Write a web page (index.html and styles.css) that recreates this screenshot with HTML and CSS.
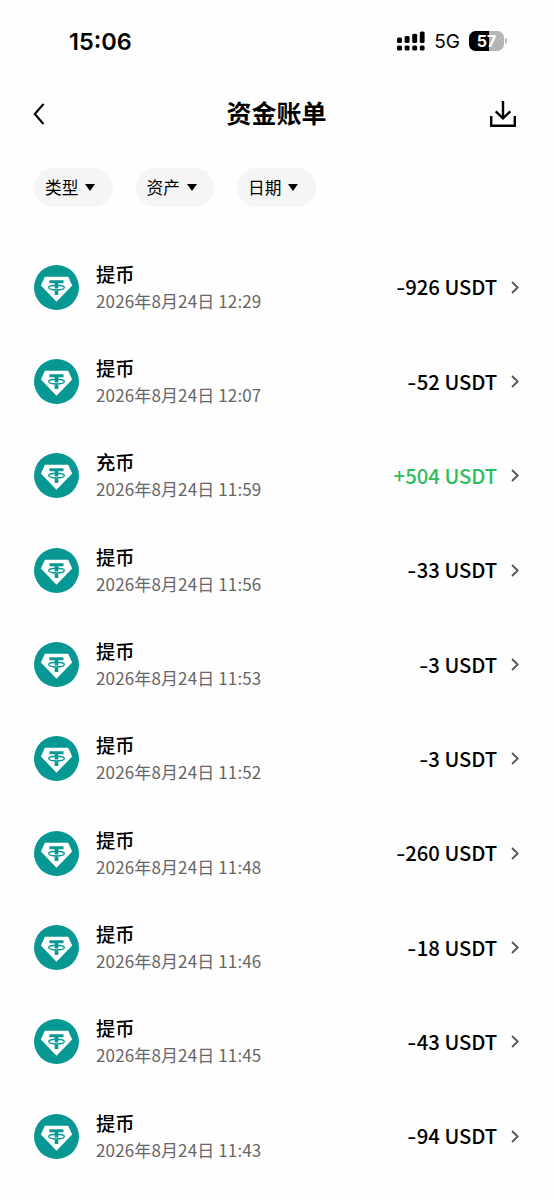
FILE: index.html
```
<!DOCTYPE html>
<html lang="zh-CN">
<head>
<meta charset="utf-8">
<title>资金账单</title>
<link rel="stylesheet" href="styles.css">
</head>
<body>
<svg class="defs" aria-hidden="true">
  <symbol id="coin" viewBox="0 0 45 45">
    <circle cx="22.5" cy="22.5" r="22.5" fill="#079893"/>
    <path d="M10.9 11.7H34.2L38.2 20.4L22.5 36.8L6.9 20.4Z" fill="#fff"/>
    <path d="M15.5 15.2H29.5V18.3H24.3V23.6H20.7V18.3H15.5ZM20.7 25.4H24.3V30H20.7Z" fill="#079893"/>
    <ellipse cx="22.5" cy="22.6" rx="7.8" ry="2.4" fill="none" stroke="#079893" stroke-width="1.4"/>
  </symbol>
  <symbol id="chevron" viewBox="0 0 8 13">
    <path d="M1 1L6.7 6.5L1 12" fill="none" stroke="#555" stroke-width="1.8"/>
  </symbol>
</svg>
<div class="status">
  <span class="time">15:06</span>
  <svg class="signal" width="28" height="20" viewBox="0 0 28 20">
    <rect x="0" y="6.5" width="5" height="5.5" rx="1.5"/><rect x="7.6" y="5" width="5" height="7" rx="1.5"/><rect x="15.2" y="2.8" width="5" height="9.2" rx="1.5"/><rect x="22.8" y="0.5" width="4.8" height="11.5" rx="1.5"/>
    <rect x="0" y="14.5" width="5" height="5" rx="1.6"/><rect x="7.6" y="14.5" width="5" height="5" rx="1.6"/><rect x="15.2" y="14.5" width="5" height="5" rx="1.6"/><rect x="22.8" y="14.5" width="4.8" height="5" rx="1.6"/>
  </svg>
  <span class="network">5G</span>
  <span class="battery">57</span>
  <span class="cap"></span>
</div>
<header class="header">
  <svg class="back" width="12" height="22" viewBox="0 0 12 22"><path d="M10.5 1L1.8 11L10.5 21" fill="none" stroke="#000" stroke-width="2.1"/></svg>
  <h1 class="title">资金账单</h1>
  <svg class="download" width="26" height="26" viewBox="0 0 26 26"><path d="M1.2 15V24.7H24.8V15M13 0V17M5.7 10.3L13 17.3L20.3 10.3" fill="none" stroke="#000" stroke-width="2.4"/></svg>
</header>
<nav class="filters">
  <span class="chip">类型<i class="caret"></i></span>
  <span class="chip">资产<i class="caret"></i></span>
  <span class="chip">日期<i class="caret"></i></span>
</nav>
<main class="list">
  <div class="row"><svg class="coin"><use href="#coin"/></svg><div class="info"><div class="name">提币</div><div class="date">2026年8月24日 12:29</div></div><div class="amount"><span class="sign">-</span>926 <span class="unit">USDT</span></div><svg class="chevron"><use href="#chevron"/></svg></div>
  <div class="row"><svg class="coin"><use href="#coin"/></svg><div class="info"><div class="name">提币</div><div class="date">2026年8月24日 12:07</div></div><div class="amount"><span class="sign">-</span>52 <span class="unit">USDT</span></div><svg class="chevron"><use href="#chevron"/></svg></div>
  <div class="row"><svg class="coin"><use href="#coin"/></svg><div class="info"><div class="name">充币</div><div class="date">2026年8月24日 11:59</div></div><div class="amount income">+504 <span class="unit">USDT</span></div><svg class="chevron"><use href="#chevron"/></svg></div>
  <div class="row"><svg class="coin"><use href="#coin"/></svg><div class="info"><div class="name">提币</div><div class="date">2026年8月24日 11:56</div></div><div class="amount"><span class="sign">-</span>33 <span class="unit">USDT</span></div><svg class="chevron"><use href="#chevron"/></svg></div>
  <div class="row"><svg class="coin"><use href="#coin"/></svg><div class="info"><div class="name">提币</div><div class="date">2026年8月24日 11:53</div></div><div class="amount"><span class="sign">-</span>3 <span class="unit">USDT</span></div><svg class="chevron"><use href="#chevron"/></svg></div>
  <div class="row"><svg class="coin"><use href="#coin"/></svg><div class="info"><div class="name">提币</div><div class="date">2026年8月24日 11:52</div></div><div class="amount"><span class="sign">-</span>3 <span class="unit">USDT</span></div><svg class="chevron"><use href="#chevron"/></svg></div>
  <div class="row"><svg class="coin"><use href="#coin"/></svg><div class="info"><div class="name">提币</div><div class="date">2026年8月24日 11:48</div></div><div class="amount"><span class="sign">-</span>260 <span class="unit">USDT</span></div><svg class="chevron"><use href="#chevron"/></svg></div>
  <div class="row"><svg class="coin"><use href="#coin"/></svg><div class="info"><div class="name">提币</div><div class="date">2026年8月24日 11:46</div></div><div class="amount"><span class="sign">-</span>18 <span class="unit">USDT</span></div><svg class="chevron"><use href="#chevron"/></svg></div>
  <div class="row"><svg class="coin"><use href="#coin"/></svg><div class="info"><div class="name">提币</div><div class="date">2026年8月24日 11:45</div></div><div class="amount"><span class="sign">-</span>43 <span class="unit">USDT</span></div><svg class="chevron"><use href="#chevron"/></svg></div>
  <div class="row"><svg class="coin"><use href="#coin"/></svg><div class="info"><div class="name">提币</div><div class="date">2026年8月24日 11:43</div></div><div class="amount"><span class="sign">-</span>94 <span class="unit">USDT</span></div><svg class="chevron"><use href="#chevron"/></svg></div>
</main>
</body>
</html>
```
FILE: styles.css
```
* { box-sizing: border-box; }
body { margin: 0; height: 1200px; overflow: hidden; background: #fefefe; color: #000; font-family: "Noto Sans CJK SC", sans-serif; }
.defs { display: none; }
svg { flex: none; display: block; }
.status { display: flex; align-items: center; height: 83px; padding: 0 47px 0 69px; font-family: Inter, sans-serif; }
.time { font-size: 23.5px; font-weight: 600; margin-right: auto; }
.network { font-size: 19px; margin: 0 9px 0 9px; }
.signal { margin: -2px 0 0; }
.battery { width: 35px; height: 20px; margin-top: -1px; border-radius: 6.5px; background: linear-gradient(90deg, #000 58%, #b5b5b5 58%); color: #fff; font-size: 16px; font-weight: 700; line-height: 20px; text-align: center; }
.cap { width: 2px; height: 6px; margin: -1px 0 0 1px; border-radius: 0 2px 2px 0; background: #b5b5b5; }
.header { display: flex; align-items: center; justify-content: space-between; height: 62px; padding: 0 38px 0 33px; }
.title { margin: 0 0 4px; font-size: 25px; font-weight: 600; line-height: 36px; }
.back { margin-right: 18px; }
.filters { display: flex; gap: 23px; padding: 23px 34px 0; height: 95px; }
.chip { display: flex; align-items: center; width: 78.5px; height: 39px; padding: 0 0 2px 11px; border-radius: 20px; background: #f5f5f5; font-size: 16.7px; line-height: 36px; }
.caret { margin: 2px 0 0 7px; border: 5.5px solid transparent; border-top: 7px solid #000; border-bottom: 0; }
.list { display: flex; flex-direction: column; }
.row { display: flex; align-items: center; height: 94.35px; padding: 0 35px 0 34px; }
.coin { width: 45px; height: 45px; }
.info { margin-left: 17px; flex: 1; padding-bottom: 1px; }
.name { font-size: 19.3px; font-weight: 500; line-height: 28px; }
.date { font-size: 17px; letter-spacing: 0.13px; line-height: 26px; color: #666; }
.amount { font-size: 20.3px; font-weight: 500; line-height: 28px; padding-bottom: 2px; white-space: nowrap; }
.unit { letter-spacing: -0.1px; }
.sign { display: inline-block; transform: scaleX(1.25); transform-origin: right; }
.income { color: #2dbd60; }
.chevron { width: 8px; height: 13px; margin-left: 14px; }
```
